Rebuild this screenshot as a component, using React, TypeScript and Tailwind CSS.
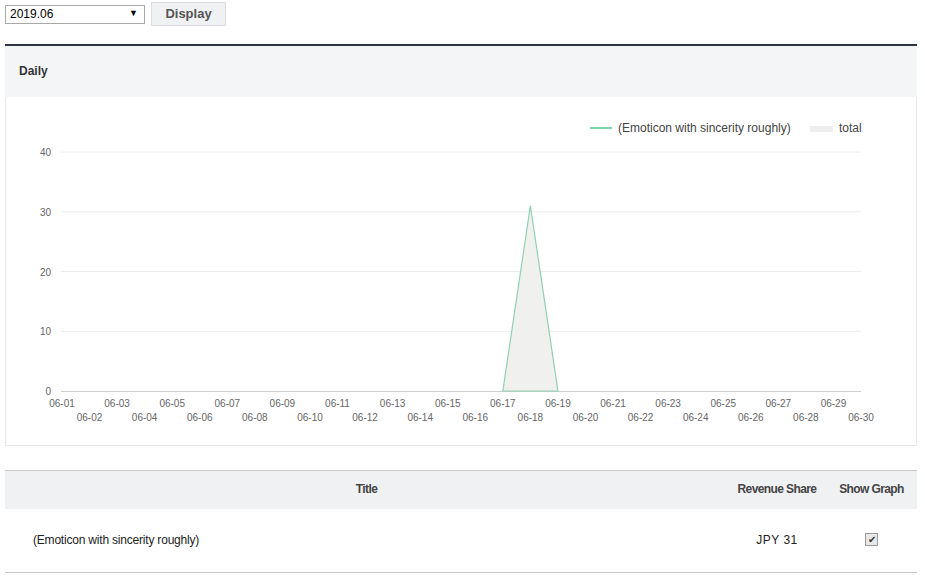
import React from "react";

const oddDays = ["01", "03", "05", "07", "09", "11", "13", "15", "17", "19", "21", "23", "25", "27", "29"];
const evenDays = ["02", "04", "06", "08", "10", "12", "14", "16", "18", "20", "22", "24", "26", "28", "30"];

const X0 = 61;
const STEP = (860 - 61) / 29;
const xAt = (day: number) => X0 + (day - 1) * STEP;
const yAt = (v: number) => 390 - v * 5.975;

const Chart = () => (
  <svg width="912" height="349" className="block">
    <g transform="translate(-5,-96)" fontFamily="'Liberation Sans', Arial, sans-serif">
      {/* legend */}
      <line x1="589" y1="127" x2="611" y2="127" stroke="#7fd3ad" strokeWidth="2" />
      <text x="617" y="131" fontSize="12" fill="#444">
        (Emoticon with sincerity roughly)
      </text>
      <rect x="809" y="125" width="23" height="6" fill="#eeeeee" />
      <text x="838" y="131" fontSize="12" fill="#444">
        total
      </text>

      {/* grid */}
      {[40, 30, 20, 10].map((v) => (
        <g key={v}>
          <line x1="60" y1={yAt(v)} x2="860" y2={yAt(v)} stroke="#ececec" strokeWidth="1" />
          <text x="50" y={yAt(v) + 4} fontSize="10" fill="#666" textAnchor="end">
            {v}
          </text>
        </g>
      ))}
      <line x1="60" y1="390.5" x2="860" y2="390.5" stroke="#cfcfcf" strokeWidth="1" />
      <text x="50" y="394" fontSize="10" fill="#666" textAnchor="end">
        0
      </text>

      {/* area */}
      <polygon
        points={`${xAt(17)},390 ${xAt(18)},${yAt(31)} ${xAt(19)},390`}
        fill="#f0f1ef"
        stroke="#8fd0b2"
        strokeWidth="1.2"
      />

      {/* x labels */}
      {oddDays.map((d) => (
        <text key={d} x={xAt(Number(d))} y="406" fontSize="10" fill="#666" textAnchor="middle">
          06-{d}
        </text>
      ))}
      {evenDays.map((d) => (
        <text key={d} x={xAt(Number(d))} y="420" fontSize="10" fill="#666" textAnchor="middle">
          06-{d}
        </text>
      ))}
    </g>
  </svg>
);

export default function App() {
  return (
    <div className="w-[925px] h-[579px] bg-white text-[#333] font-['Liberation_Sans',Arial,sans-serif]">
      <div className="flex items-center gap-[6px] pl-[5px] pt-[2px]">
        <div className="w-[140px] h-[19px] border border-[#a9a9a9] flex items-center justify-between pl-[4px] pr-[6px] text-[12px] text-black">
          <span>2019.06</span>
          <span className="text-[9px]">▼</span>
        </div>
        <button className="w-[75px] h-[24px] bg-[#f0f1f3] border border-[#dcdde0] text-[13px] font-bold text-[#555] leading-[20px]">
          Display
        </button>
      </div>

      <div className="mx-[5px] mt-[18px] w-[912px] border-t-2 border-[#2e3440]">
        <div className="h-[51px] bg-[#f4f5f7] flex items-center px-[14px] pb-[2px] text-[12px] font-bold text-[#333]">
          Daily
        </div>
        <div className="h-[349px] border border-t-0 border-[#e8e8e8] bg-white">
          <Chart />
        </div>
      </div>

      <div className="mx-[5px] mt-[24px] w-[912px] border-t border-[#c8c8c8] border-b">
        <div className="flex h-[38px] bg-[#f0f1f3] items-center pb-[2px] text-[12px] font-bold text-[#444] tracking-[-0.6px]">
          <div className="w-[723px] text-center">Title</div>
          <div className="w-[98px] text-center">Revenue Share</div>
          <div className="flex-1 text-center">Show Graph</div>
        </div>
        <div className="flex h-[63px] items-center pb-[2px] text-[12px] text-[#222] tracking-[-0.2px]">
          <div className="w-[723px] pl-[28px]">(Emoticon with sincerity roughly)</div>
          <div className="w-[98px] text-center tracking-[0.5px]">JPY 31</div>
          <div className="flex-1 flex justify-center">
            <span className="w-[13px] h-[13px] border border-[#999] bg-[#e8e8e8] flex items-center justify-center text-[10px] leading-none text-[#333]">
              ✔
            </span>
          </div>
        </div>
      </div>
    </div>
  );
}
